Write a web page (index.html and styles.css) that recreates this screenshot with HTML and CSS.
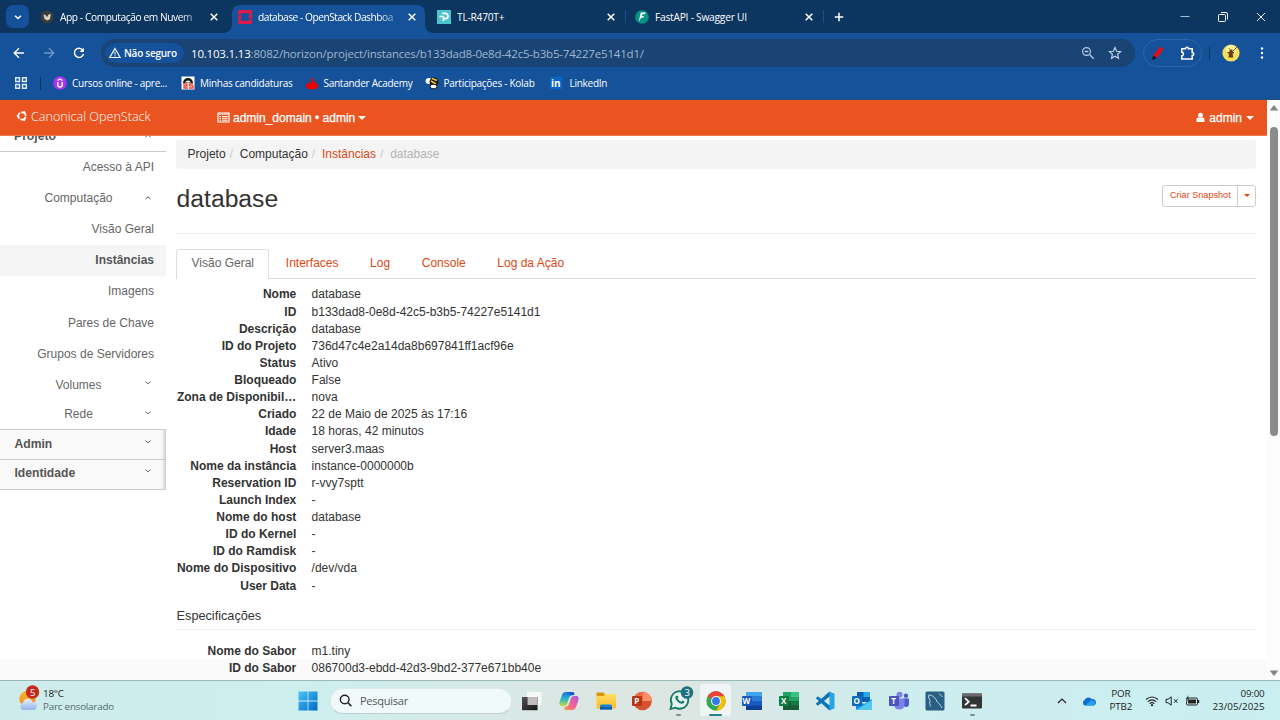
FILE: index.html
```html
<!DOCTYPE html>
<html lang="pt-BR">
<head>
<meta charset="utf-8">
<title>database - OpenStack Dashboard</title>
<link rel="stylesheet" href="styles.css">
</head>
<body>
<svg width="0" height="0" class="defs">
  <defs>
    <symbol id="x" viewBox="0 0 10 10"><path d="M1.7 1.7l6.6 6.6M8.3 1.7L1.7 8.3" stroke="currentColor" stroke-width="1.5"/></symbol>
    <symbol id="down" viewBox="0 0 8 8"><path d="M1.5 2.7L4 4.8l2.5-2.1" fill="none" stroke="#666" stroke-width="1"/></symbol>
    <symbol id="up" viewBox="0 0 8 8"><path d="M1.5 5L4 2.9 6.5 5" fill="none" stroke="#555" stroke-width="1"/></symbol>
    <linearGradient id="win" x1="0" y1="0" x2="1" y2="1"><stop stop-color="#4bc5f5"/><stop offset="1" stop-color="#0067c8"/></linearGradient>
    <linearGradient id="sun" x1="0" y1="0" x2="0" y2="1"><stop stop-color="#f8b92a"/><stop offset="1" stop-color="#f48a1c"/></linearGradient>
    <linearGradient id="cloudg" x1="0" y1="0" x2="0" y2="1"><stop stop-color="#e8f1fd"/><stop offset="1" stop-color="#93b3e8"/></linearGradient>
    <linearGradient id="copA" x1="0" y1="0" x2="0" y2="1"><stop stop-color="#1a6fe0"/><stop offset=".5" stop-color="#22b8c8"/><stop offset="1" stop-color="#c9d93a"/></linearGradient>
    <linearGradient id="copB" x1="1" y1="0" x2="0" y2="1"><stop stop-color="#a45be8"/><stop offset=".5" stop-color="#f0609a"/><stop offset="1" stop-color="#fb9a3c"/></linearGradient>
    <linearGradient id="folder" x1="0" y1="0" x2="0" y2="1"><stop stop-color="#ffdc62"/><stop offset="1" stop-color="#f8bd2c"/></linearGradient>
    <linearGradient id="dark" x1="0" y1="0" x2="1" y2="1"><stop stop-color="#505050"/><stop offset="1" stop-color="#151515"/></linearGradient>
  </defs>
</svg>

<header class="tabstrip">
  <span class="tab-menu"><svg width="10" height="10" viewBox="0 0 10 10"><path d="M2 3.7l3 2.8 3-2.8" fill="none" stroke="#fff" stroke-width="1.5"/></svg></span>
  <div class="tab tab-first">
    <svg class="fav" viewBox="0 0 14 14"><circle cx="7" cy="7" r="6.5" fill="#3c3c38"/><path d="M3.500 4.500l2 .5 1.500 2 1.500-2.500 2.300-.5-.8 5-2.500 1.500L4.500 9z" fill="#d9d4cb"/><path d="M6 3.500l1.500 2L7 7z" fill="#403c38"/></svg>
    <span class="tab-title fade">App - Computação em Nuvem</span>
    <svg class="close" viewBox="0 0 10 10"><use href="#x"/></svg>
  </div>
  <div class="tab active">
    <svg class="fav" viewBox="0 0 14 14"><path d="M1 0h12q1 0 1 1v3.5h-3.2V3.2H3.2v1.3H0V1q0-1 1-1zM0 5.3h3.2v3.4H0zM10.800 5.300h3.200v3.400h-3.200zM0 9.500h3.200v1.300h7.600V9.500H14V13q0 1-1 1H1q-1 0-1-1z" fill="#dc1a4b"/></svg>
    <span class="tab-title fade">database - OpenStack Dashboa</span>
    <svg class="close" viewBox="0 0 10 10"><use href="#x"/></svg>
  </div>
  <div class="tab">
    <svg class="fav" viewBox="0 0 14 14"><path d="M0 0h14v14H0z" fill="#4bc4ce"/><path d="M6 4.300V3.300h2.300a2.600 2.600 0 0 1 0 5.400H6M2.500 6.500h3.700M6.500 6.500v4.500" fill="none" stroke="#fff" stroke-width="1.700"/></svg>
    <span class="tab-title">TL-R470T+</span>
    <svg class="close" viewBox="0 0 10 10"><use href="#x"/></svg>
  </div>
  <div class="tab">
    <svg class="fav" viewBox="0 0 14 14"><circle cx="7" cy="7" r="6.800" fill="#079486"/><path d="M5.800 2.500H11L9.800 4.300H7.500L6.900 6h2.300L8 7.700H6.300L3.800 11.500z" fill="#fff"/></svg>
    <span class="tab-title">FastAPI - Swagger UI</span>
    <svg class="close" viewBox="0 0 10 10"><use href="#x"/></svg>
  </div>
  <svg class="new-tab" viewBox="0 0 10 10"><path d="M5 .8v8.400M.8 5h8.400" stroke="#fff" stroke-width="1.500"/></svg>
  <div class="window-controls">
    <svg viewBox="0 0 12 12"><path d="M1.500 5.500h9" stroke="#a9bdd3"/></svg>
    <svg viewBox="0 0 12 12"><rect x="1.500" y="3.500" width="7" height="7" rx="1" fill="none" stroke="#fff"/><path d="M4 1.500h5q1.500 0 1.500 1.500v5.500" fill="none" stroke="#fff"/></svg>
    <svg viewBox="0 0 12 12"><path d="M2 2l8 8M10 2l-8 8" stroke="#e8eef5"/></svg>
  </div>
</header>

<div class="browser">
  <div class="toolbar">
    <div class="nav">
      <svg viewBox="0 0 14 14"><path d="M12 7H2.500M7 2.200L2.200 7 7 11.800" fill="none" stroke="#fff" stroke-width="1.400"/></svg>
      <svg viewBox="0 0 14 14"><path d="M2 7h9.500M7 2.200L11.800 7 7 11.800" fill="none" stroke="#7297c6" stroke-width="1.300"/></svg>
      <svg viewBox="0 0 14 14"><path d="M10.800 4.200A4.600 4.600 0 1 0 11.500 8" fill="none" stroke="#fff" stroke-width="1.500"/><path d="M11.900 1.800v4.300H7.600z" fill="#fff"/></svg>
    </div>
    <div class="omnibox">
      <span class="chip"><svg width="12" height="12" viewBox="0 0 12 12"><path d="M6 1.400L11.200 10.500H.8z" fill="none" stroke="#fff" stroke-width="1.100"/><path d="M6 4.500v3M6 8.300v1.100" stroke="#fff"/></svg><span>Não seguro</span></span>
      <span class="url"><b>10.103.1.13</b>:8082/horizon/project/instances/b133dad8-0e8d-42c5-b3b5-74227e5141d1/</span>
      <svg class="om-icon" viewBox="0 0 14 14"><circle cx="5.500" cy="5.500" r="3.900" fill="none" stroke="#b7cce5" stroke-width="1.200"/><path d="M3.700 5.500h3.600M8.500 8.500l4.200 4.200" stroke="#b7cce5" stroke-width="1.300"/></svg>
      <svg class="om-icon star" viewBox="0 0 14 14"><path d="M7 1.500l1.600 3.700 4 .4-3 2.700.9 4L7 10.200 3.500 12.300l.9-4-3-2.700 4-.4z" fill="none" stroke="#c2d4ea" stroke-width="1.150"/></svg>
    </div>
    <div class="extensions">
      <svg viewBox="0 0 14 14"><path d="M9.300.8l3.300 2-6.200 8.400-3.400-2z" fill="#e80a12"/><path d="M3 9.200l3.400 2L2 13.200z" fill="#191014"/></svg>
      <svg viewBox="0 0 15 15"><path d="M1.800 2.800h3.700a1.500 1.500 0 0 1 3 0h3.700v3.700a1.500 1.500 0 0 1 0 3V13H1.800V9.700a1.700 1.700 0 0 0 0-3.400z" fill="none" stroke="#fff" stroke-width="1.500"/></svg>
    </div>
    <i class="tool-sep"></i>
    <svg class="avatar" viewBox="0 0 18 18"><circle cx="9" cy="9" r="8.600" fill="#f7df5a"/><circle cx="9" cy="6" r="5" fill="#fff3a2"/><path d="M7.500 5.500h3v2.500h1.500v1.500h-1.500l.8 4H6.500l.5-4H5.500V8h2z" fill="#6b3b16"/><path d="M10 8l5-5M7.500 5l-1-1" stroke="#8b5721"/></svg>
    <svg class="dots" viewBox="0 0 4 14"><circle cx="2" cy="2.500" r="1.200"/><circle cx="2" cy="7" r="1.200"/><circle cx="2" cy="11.500" r="1.200"/></svg>
  </div>
  <nav class="bookmarks">
    <svg class="apps" viewBox="0 0 14 14"><path d="M1.700 1.700h3.800v3.800H1.700zM8.500 1.700h3.800v3.800H8.500zM1.700 8.500h3.800v3.800H1.700zM8.500 8.500h3.800v3.800H8.500z" fill="none" stroke="#dce9f7" stroke-width="1.400"/></svg>
    <i class="tool-sep"></i>
    <a class="bm-udemy"><svg viewBox="0 0 14 14"><circle cx="7" cy="7" r="6.800" fill="#a435f0"/><path d="M4.800 6v3a2.200 2 0 0 0 4.400 0V6M4.500 4.500L7 3l2.500 1.500" fill="none" stroke="#fff" stroke-width="1.400"/></svg>Cursos online - apre...</a>
    <a class="bm-jobs"><svg viewBox="0 0 14 14"><path d="M.5.500h13v13H.5z" fill="#fff"/><path d="M2 7a5 5 0 0 1 10 0z" fill="#181818"/><path d="M4 6.500q3-4 6 0" fill="#fff"/><path d="M2 8h4v2H3v2h4M12 8H8.500v1.800H12V12H8" fill="none" stroke="#e8453c" stroke-width="1.300"/></svg>Minhas candidaturas</a>
    <a class="bm-sant"><svg viewBox="0 0 14 14"><ellipse cx="7" cy="10" rx="6.300" ry="3.400" fill="#ec0000"/><path d="M7 1q0 2 2 4t1.500 4.500l-5 1Q3 8 5 5q0 2 2 3 .5-2-.8-4T7 1z" fill="#ec0000"/></svg>Santander Academy</a>
    <a class="bm-kolab"><svg viewBox="0 0 14 14"><ellipse cx="4" cy="5" rx="3.500" ry="3" fill="#fff"/><ellipse cx="9" cy="6" rx="4.500" ry="4.500" fill="#171717"/><path d="M7 2.500l5 2M6 5l5 3" stroke="#f4c430" stroke-width="1.500"/><ellipse cx="8.500" cy="10.500" rx="3.500" ry="2.300" fill="#fff" stroke="#171717"/></svg>Participações - Kolab</a>
    <a class="bm-in"><svg viewBox="0 0 14 14"><rect x=".8" y=".8" width="12.400" height="12.400" rx="1" fill="#0a66c2"/><text x="2" y="11" font-size="10" font-weight="700" fill="#fff">in</text></svg>LinkedIn</a>
  </nav>
</div>

<div class="viewport">
  <div class="page">
    <div class="navbar">
      <div class="brand"><svg viewBox="0 0 12 12"><circle cx="6" cy="6" r="3.700" fill="none" stroke="#fff" stroke-width="1.700" stroke-dasharray="6.600 1.150" stroke-dashoffset="7"/><circle cx="1.900" cy="6" r="1.200" fill="#fff"/><circle cx="8.200" cy="2.300" r="1.200" fill="#fff"/><circle cx="8.200" cy="9.700" r="1.200" fill="#fff"/></svg><span>Canonical OpenStack</span></div>
      <div class="context"><svg viewBox="0 0 13 11"><path d="M1 1h11v9H1z" fill="none" stroke="#fff" stroke-width="1.200"/><path d="M1 2h11M2.500 4.500H4M5 4.500h5.500M2.500 6.300H4M5 6.300h5.500M2.500 8.200H4M5 8.200h5.500" stroke="#fff"/></svg><span>admin_domain • admin</span><i class="caret"></i></div>
      <div class="user"><svg viewBox="0 0 10 11"><circle cx="5" cy="3" r="2.700"/><path d="M.5 10.500V8q0-2.500 2-2.700 2.500 1.600 5 0 2 .2 2 2.700v2.500z"/></svg><span>admin</span><i class="caret"></i></div>
    </div>
    <div class="body">
      <aside class="sidebar">
        <div class="panel-head first"><span>Projeto</span><svg class="chev"><use href="#up"/></svg></div>
        <div class="item">Acesso à API</div>
        <div class="group"><span>Computação</span><svg class="chev"><use href="#up"/></svg></div>
        <div class="item">Visão Geral</div>
        <div class="item current">Instâncias</div>
        <div class="item">Imagens</div>
        <div class="item">Pares de Chave</div>
        <div class="item">Grupos de Servidores</div>
        <div class="group short"><span>Volumes</span><svg class="chev"><use href="#down"/></svg></div>
        <div class="group short"><span>Rede</span><svg class="chev"><use href="#down"/></svg></div>
        <div class="panel-head boxed"><span>Admin</span><svg class="chev"><use href="#down"/></svg></div>
        <div class="panel-head boxed last"><span>Identidade</span><svg class="chev"><use href="#down"/></svg></div>
      </aside>
      <main>
        <ol class="breadcrumb"><li>Projeto</li><li>Computação</li><li class="link">Instâncias</li><li class="off">database</li></ol>
        <div class="page-head">
          <h1>database</h1>
          <div class="btn-group"><span class="btn">Criar Snapshot</span><span class="btn drop"><i class="caret"></i></span></div>
        </div>
        <div class="tabs"><span class="sel">Visão Geral</span><span>Interfaces</span><span>Log</span><span>Console</span><span>Log da Ação</span></div>
        <dl>
          <dt>Nome</dt><dd>database</dd>
          <dt>ID</dt><dd>b133dad8-0e8d-42c5-b3b5-74227e5141d1</dd>
          <dt>Descrição</dt><dd>database</dd>
          <dt>ID do Projeto</dt><dd>736d47c4e2a14da8b697841ff1acf96e</dd>
          <dt>Status</dt><dd>Ativo</dd>
          <dt>Bloqueado</dt><dd>False</dd>
          <dt>Zona de Disponibil…</dt><dd>nova</dd>
          <dt>Criado</dt><dd>22 de Maio de 2025 às 17:16</dd>
          <dt>Idade</dt><dd>18 horas, 42 minutos</dd>
          <dt>Host</dt><dd>server3.maas</dd>
          <dt>Nome da instância</dt><dd>instance-0000000b</dd>
          <dt>Reservation ID</dt><dd>r-vvy7sptt</dd>
          <dt>Launch Index</dt><dd>-</dd>
          <dt>Nome do host</dt><dd>database</dd>
          <dt>ID do Kernel</dt><dd>-</dd>
          <dt>ID do Ramdisk</dt><dd>-</dd>
          <dt>Nome do Dispositivo</dt><dd>/dev/vda</dd>
          <dt>User Data</dt><dd>-</dd>
        </dl>
        <h4>Especificações</h4>
        <dl>
          <dt>Nome do Sabor</dt><dd>m1.tiny</dd>
          <dt>ID do Sabor</dt><dd>086700d3-ebdd-42d3-9bd2-377e671bb40e</dd>
        </dl>
      </main>
    </div>
  </div>
  <div class="scrollbar">
    <svg viewBox="0 0 10 8"><path d="M5 1l4.300 5.500H.7z" fill="#858585"/></svg>
    <i class="thumb"></i>
    <svg viewBox="0 0 10 8"><path d="M5 7L.7 1.500h8.600z" fill="#858585"/></svg>
  </div>
</div>

<footer class="taskbar">
  <div class="weather">
    <svg viewBox="0 0 24 28"><circle cx="9.500" cy="14" r="8.200" fill="url(#sun)"/><path d="M5 25a4 4 0 0 1 0-7.500 5 5 0 0 1 9.500-.5 4 4 0 0 1 .5 8z" fill="url(#cloudg)"/><circle cx="14.500" cy="7" r="6.700" fill="#c42b1c"/><text x="11.900" y="10.500" font-size="9.500" fill="#fff">5</text></svg>
    <div><p>18°C</p><p class="dim">Parc ensolarado</p></div>
  </div>
  <svg class="start" viewBox="0 0 20 20"><path d="M.5.500h9.100v9.100H.5zM10.400.500h9.100v9.100h-9.100zM.5 10.400h9.100v9.100H.5zM10.400 10.400h9.100v9.100h-9.100z" fill="url(#win)"/></svg>
  <div class="search"><svg viewBox="0 0 13 13"><circle cx="5.700" cy="5.500" r="4.300" fill="none" stroke="#222" stroke-width="1.400"/><path d="M9 8.800l3.300 3.300" stroke="#222" stroke-width="1.600"/></svg><span>Pesquisar</span></div>
  <div class="apps-row">
    <span><svg viewBox="0 0 20 20"><path d="M5 .800h14.500v13.500H5z" fill="#f8f8f8"/><path d="M0 6h15.500v13.200H0z" fill="url(#dark)"/><path d="M5.500 6h10v8h-10z" fill="#bdbdbd"/></svg></span>
    <span><svg viewBox="0 0 20 20"><path d="M7 1h6.500Q15.500 1 15 4L12.500 4.500Q10.500 5 10 7L8 13q-.8 2-3 2H2.500Q0 15 .5 11L3 4q1-3 4-3z" fill="url(#copA)"/><path d="M13 19H7Q5 19 5.500 16l2-.5Q9.500 15 10 13l2-6q.8-2 3-2h2.500Q20 5 19.500 9L17 16q-1 3-4 3z" fill="url(#copB)"/><path d="M8 1h6q1 0 1.500 3h-4z" fill="#2056c8"/></svg></span>
    <span><svg viewBox="0 0 20 20"><path d="M.5 1.500h7l1.500 2V6H.500z" fill="#d99708"/><path d="M.5 5h7L9.500 3H19q1 0 1 1v13.500H.500z" fill="url(#folder)"/><path d="M4 18.500V15q0-1.500 1.500-1.500h9Q16 13.500 16 15v3.500z" fill="#1581d8"/><path d="M4 16h12v2.500H4z" fill="#0c5ea8"/></svg></span>
    <span><svg viewBox="0 0 20 20"><circle cx="10.500" cy="10" r="9.300" fill="#d35230"/><path d="M10.500.7a9.300 9.300 0 0 1 9.300 9.300h-9.300z" fill="#ff8f6b"/><path d="M1.300 10H10.500V.700A9.300 9.300 0 0 0 1.300 10z" fill="#ed6c47"/><rect y="5" width="10" height="10" rx="1" fill="#b83618"/><text x="2.300" y="12.900" class="glyph">P</text></svg></span>
    <span class="open"><svg class="wide" viewBox="0 0 24 24"><path d="M2.500 22l1.300-5a8.700 8.700 0 1 1 3.500 3.600z" fill="#e7f5f2" stroke="#177a62" stroke-width="1.800"/><path d="M8 9q1.500-1.500 2.500 1l-.8 1.500q1.500 2.500 3.500 3.200l1.500-1.200q2.500 1 1.300 2.500-3 2.200-6.500-1.500T8 9z" fill="#177a62"/><circle cx="19" cy="5.500" r="6.300" fill="#1f7080"/><text x="16.500" y="9" font-size="9.500" fill="#fff">3</text></svg></span>
    <span class="focused"><svg viewBox="0 0 20 20"><circle cx="10" cy="10" r="9.700" fill="#34a853"/><path d="M10 10L1.600 5.200a9.700 9.700 0 0 1 16.800 0z" fill="#ea4335"/><path d="M10 5.200h8.400A9.700 9.700 0 0 1 10 19.700l4.200-7.300z" fill="#fbbc04"/><circle cx="10" cy="10" r="4.900" fill="#fff"/><circle cx="10" cy="10" r="3.900" fill="#3078ed"/></svg></span>
    <span><svg viewBox="0 0 20 20"><path d="M4 1h16v18H4z" fill="#185abd"/><path d="M4 1h16v4.500H4z" fill="#41a5ee"/><path d="M4 5.500h16V10H4z" fill="#2b7cd3"/><path d="M4 14.500h16V19H4z" fill="#103f91"/><rect y="5" width="10" height="10" rx="1" fill="#185abd"/><text x=".6" y="12.900" class="glyph">W</text></svg></span>
    <span><svg viewBox="0 0 20 20"><path d="M4 1h8v9H4z" fill="#21a366"/><path d="M12 1h8v4.500h-8z" fill="#33c481"/><path d="M12 5.500h8V10h-8z" fill="#21a366"/><path d="M4 10h16v9H4z" fill="#185c37"/><path d="M12 10h8v4.500h-8z" fill="#107c41"/><rect y="5" width="10" height="10" rx="1" fill="#107c41"/><text x="2" y="12.900" class="glyph">X</text></svg></span>
    <span><svg viewBox="0 0 20 20"><path d="M14.500.5L.800 12.800l2 2L16 4.500z" fill="#1070b3"/><path d="M14.500 19.500L.800 7.200l2-2L16 15.500z" fill="#0877b9"/><path d="M14.500.500l5 2.200v14.600l-5 2.200z" fill="#2ba4e4"/></svg></span>
    <span><svg viewBox="0 0 20 20"><path d="M5 1h13v10H5z" fill="#0a5faf"/><path d="M11.500 1H18v5h-6.500z" fill="#28a8ea"/><path d="M4 8l8 5 8-5v10q0 1-1 1H5q-1 0-1-1z" fill="#1490df"/><path d="M4 19l16-10v9q0 1-1 1z" fill="#50c8f0"/><rect y="5" width="10" height="10" rx="1" fill="#0f6cbd"/><text x="1.400" y="12.900" class="glyph">O</text></svg></span>
    <span><svg viewBox="0 0 20 20"><circle cx="17" cy="4.800" r="2.200" fill="#5059c9"/><circle cx="10.500" cy="3.700" r="3" fill="#7b83eb"/><path d="M14 7.500h6V13q0 3-3 3t-3-3z" fill="#5059c9"/><path d="M5 7.500h10.500V13q0 5.500-5.200 5.500T5 13z" fill="#7b83eb"/><rect y="5" width="10" height="10" rx="1" fill="#4b53bc"/><text x="2.200" y="12.900" class="glyph">T</text></svg></span>
    <span><svg viewBox="0 0 20 20"><rect x=".5" y=".5" width="19" height="19" rx="1.500" fill="#285f83"/><path d="M5.500 15.500Q4 12 5 9.500L3.500 6Q2.500 3.500 5 4q4 .5 6 4.500 1 3 3.500 4.500l1 1.500 1.500 2.500M14 2.500l3.500 3.500" fill="none" stroke="#bdd1dd" stroke-width="1"/></svg></span>
    <span class="open"><svg viewBox="0 0 20 20"><rect y="2.500" width="20" height="15" rx="1" fill="#333436"/><path d="M0 2.500h20v3H0z" fill="#6b6b6b"/><path d="M3 7.200l3.800 3.500L3 14.200M8.500 14.500h6" fill="none" stroke="#fff" stroke-width="1.800"/></svg></span>
  </div>
  <div class="tray">
    <svg class="t-up" viewBox="0 0 12 12"><path d="M2 8l4-4 4 4" fill="none" stroke="#222" stroke-width="1.200"/></svg>
    <svg class="t-cloud" viewBox="0 0 14 10"><path d="M3 9.500A3 3 0 0 1 2.500 4 4.500 4.500 0 0 1 10 3.200a3.200 3.200 0 0 1 1.500 6.300z" fill="#0f6fd0"/><path d="M3 9.500L9 4.500a3.500 3.500 0 0 1 4.500 3q0 2-2 2z" fill="#2aa0ea"/></svg>
    <div class="lang"><p>POR</p><p>PTB2</p></div>
    <svg class="t-wifi" viewBox="0 0 14 12"><path d="M1 4.500q6-5 12 0M2.800 6.600q4.200-3.500 8.400 0M4.600 8.600q2.400-2 4.800 0" fill="none" stroke="#222" stroke-width="1.100"/><circle cx="7" cy="10.200" r="1.100" fill="#222"/></svg>
    <svg class="t-vol" viewBox="0 0 14 12"><path d="M1 4.300h2L6.200 1.800v8.400L3 7.700H1zM9 4.200l3.500 3.600M12.500 4.200L9 7.800" fill="none" stroke="#222"/></svg>
    <svg class="t-bat" viewBox="0 0 15 12"><rect x="1.500" y="3" width="11" height="7" rx="1.200" fill="none" stroke="#222"/><path d="M3 4.500h8v4H3zM13 5h1.200v3H13z" fill="#222"/><path d="M3.500 0L.5 4h2L1.500 7l4-4.200H3.500z" fill="#222" stroke="#cdeff0" stroke-width=".4"/></svg>
    <div class="clock"><p>09:00</p><p class="date">23/05/2025</p></div>
  </div>
</footer>
</body>
</html>
```

FILE: styles.css
```css
* { box-sizing: border-box; }
body {
  margin: 0; width: 1280px; height: 720px; overflow: hidden;
  display: flex; flex-direction: column;
  font-family: "Liberation Sans", Arial, sans-serif; font-size: 12px; color: #333; background: #fff;
}
p, h1, h4, ol, dl, dd { margin: 0; padding: 0; }
svg { display: block; flex: none; overflow: visible; }
.defs { position: absolute; }

/* Browser tabs */
.tabstrip {
  height: 33px; flex: none; display: flex; align-items: center; background: #0c355f; color: #fff;
  font: 10.2px "Open Sans", sans-serif; letter-spacing: -.23px; padding-left: 6px; white-space: nowrap;
}
.tab-menu { width: 23px; height: 23px; border-radius: 7px; background: #15509a; display: flex; align-items: center; justify-content: center; }
.tab { width: 198.500px; height: 28px; margin-top: 5px; padding: 0 8px 5px 12px; display: flex; align-items: center; position: relative; }
.tab-first { width: 203px; padding-left: 11px; padding-right: 13.500px; }
.fav { width: 14px; height: 14px; }
.tab-title { flex: 1; margin-left: 6px; overflow: hidden; }
.fade { -webkit-mask-image: linear-gradient(90deg, #000 86%, rgba(0,0,0,.3) 100%); mask-image: linear-gradient(90deg, #000 86%, rgba(0,0,0,.3) 100%); margin-right: 10px; letter-spacing: -.42px; }
.close { width: 10px; height: 10px; color: #fff; }
.active { width: 193px; padding: 0 8px 5px 6px; border-radius: 8px 8px 0 0; background: #15529a; }
.active .fade { letter-spacing: -.48px; }
.active::before, .active::after { content: ""; position: absolute; bottom: 0; width: 8px; height: 8px; }
.active::before { left: -8px; background: radial-gradient(circle at 0 0, transparent 7.500px, #15529a 8px); }
.active::after { right: -8px; background: radial-gradient(circle at 100% 0, transparent 7.500px, #15529a 8px); }
.active + .tab { width: 202px; padding-right: 10.500px; }
.active ~ .tab:not(.active) { border-right: 1px solid transparent; background: linear-gradient(#1d4f86, #1d4f86) 100% 5px / 1px 13px no-repeat; }
.active + .tab + .tab { padding-left: 8px; padding-right: 10px; width: 197.500px; }
.new-tab { width: 10px; height: 10px; margin-left: 9px; }
.window-controls { margin-left: auto; display: flex; gap: 26px; padding-right: 13px; }
.window-controls svg { width: 12px; height: 12px; }

/* Toolbar and bookmarks */
.browser { flex: none; height: 67px; background: #15529a; box-shadow: inset 0 -1px #254d82; font: 10px "Open Sans", sans-serif; color: #fff; }
.toolbar { height: 40px; display: flex; align-items: center; }
.nav { width: 101px; display: flex; gap: 16px; padding-left: 12px; }
.nav svg { width: 14px; height: 14px; }
.omnibox { width: 1034px; height: 28px; border-radius: 14px; background: #194474; display: flex; align-items: center; padding: 0 13px 0 4px; }
.chip { width: 79px; height: 20px; border-radius: 10px; background: #15509a; display: flex; align-items: center; gap: 3px; padding-left: 4px; font-weight: 600; letter-spacing: -.25px; white-space: nowrap; }
.url { flex: 1; margin-left: 7px; font-size: 11.500px; letter-spacing: -.19px; color: #9fb7d3; white-space: nowrap; }
.url b { font-weight: 400; color: #fff; }
.om-icon { width: 14px; height: 14px; }
.star { margin-left: 13px; }
.extensions { width: 59px; height: 28px; margin-left: 8px; border: 1px solid #2c65a8; border-radius: 14px; display: flex; align-items: center; gap: 15px; padding-left: 6px; }
.extensions svg { width: 15px; height: 15px; }
.tool-sep { width: 1px; height: 13px; background: #0c355f; flex: none; }
.toolbar .tool-sep { margin-left: 7px; }
.avatar { width: 18px; height: 18px; margin-left: 12px; }
.dots { width: 4px; height: 14px; fill: #fff; margin-left: 20px; }
.bookmarks { height: 20px; display: flex; align-items: center; padding-left: 14px; letter-spacing: -.27px; white-space: nowrap; }
.apps { width: 14px; height: 14px; }
.bookmarks .tool-sep { margin: 0 12px; }
.bookmarks a { display: flex; align-items: center; gap: 5px; }
.bookmarks a svg { width: 14px; height: 14px; }
.bm-udemy { width: 128px; }
.bm-jobs { width: 123.500px; }
.bm-sant { width: 120px; }
.bm-kolab { width: 124px; }
.bookmarks .bm-in { gap: 7px; }
svg text { font-family: "Open Sans", sans-serif; letter-spacing: 0; }
svg .glyph { font-size: 8px; font-weight: 700; fill: #fff; }

/* Web page */
.viewport { flex: 1; min-height: 0; display: flex; }
.page { width: 1267px; display: flex; flex-direction: column; background: linear-gradient(#fff 559px, #fafafa 559px); }
.navbar { height: 36px; flex: none; background: #e95420; color: #fff; display: flex; align-items: center; border-bottom: 1px solid #ef7a50; z-index: 1; }
.navbar svg { fill: #fff; }
.brand { width: 217px; padding-left: 16px; display: flex; align-items: center; gap: 3px; font: 300 12.600px "Open Sans", sans-serif; margin-top: -3px; }
.brand svg { width: 12px; height: 12px; }
.brand svg > circle:first-child { fill: none; }
.context, .user { display: flex; align-items: center; -webkit-text-stroke: .25px #fff; }
.context svg { width: 13px; height: 11px; margin-right: 3px; }
.user { margin-left: auto; padding-right: 13px; }
.user svg { width: 9px; height: 11px; margin-right: 4px; }
.caret { display: inline-block; border: 4px solid transparent; border-top-color: currentColor; border-bottom: 0; margin-left: 4px; }
.context .caret { margin-left: 3px; }
.body { flex: 1; min-height: 0; display: flex; overflow: hidden; }
.sidebar { width: 166px; flex: none; margin-top: -15px; color: #666; }
.panel-head { height: 31px; display: flex; align-items: center; justify-content: space-between; padding: 0 14px; font-weight: 700; color: #555; }
.first { border-bottom: 1px solid #ccc; font-size: 12.200px; }
.chev { width: 8px; height: 8px; }
.item { height: 31.300px; display: flex; align-items: center; justify-content: flex-end; padding: 0 12px 1.500px 0; }
.current { background: #f5f5f5; font-weight: 700; color: #555; }
.group { height: 30.500px; display: flex; align-items: center; padding: 0 14px 1px 0; }
.group span { flex: 1; text-align: center; padding-left: 13px; }
.short { height: 29.400px; padding-bottom: 0; }
.boxed { height: 30px; border-top: 1px solid #ccc; border-right: 1px solid #ccc; box-shadow: inset -3px 0 2px -1px #ddd; background: #f9f9f9; font-size: 12.150px; padding: 0 13px 2px 14.500px; }
.boxed .chev { margin-top: -4px; }
.short .chev { margin-top: -3px; }
.last { height: 31px; border-bottom: 1px solid #ccc; padding-bottom: 3px; }
main { width: 1080px; margin-left: 10px; }
.breadcrumb { height: 29px; margin-top: 4px; background: #f4f4f4; border-radius: 3px; list-style: none; display: flex; align-items: center; padding: 0 0 1.500px 11.600px; color: #333; }
.breadcrumb li + li::before { content: "/"; color: #ccc; padding: 0 6.800px 0 4px; }
.breadcrumb .link { color: #dd4814; }
.breadcrumb .off { color: #b4b4b4; }
.page-head { height: 65px; display: flex; justify-content: space-between; border-bottom: 1px solid #eee; }
h1 { font-size: 24.700px; font-weight: 400; line-height: 30px; margin-top: 15px; padding-left: .6px; }
.btn-group { display: flex; width: 94px; height: 22px; margin-top: 16px; border: 1px solid #ccc; border-radius: 3px; color: #dd4814; font-size: 9.100px; line-height: 19px; white-space: nowrap; }
.btn { flex: 1; padding-left: 7px; }
.drop { flex: none; width: 18px; border-left: 1px solid #ccc; padding: 0; display: flex; align-items: center; justify-content: center; }
.drop .caret { border-width: 3px; border-bottom: 0; margin: -1px 0 0; }
.tabs { height: 30px; margin-top: 15px; border-bottom: 1px solid #ddd; display: flex; color: #dd4814; line-height: 28px; }
.tabs span + span { padding: 0 15.800px; }
.tabs span:nth-child(2) { padding-left: 16.800px; }
.tabs .sel { width: 93px; height: 30px; padding-left: 14.500px; border: 1px solid #ddd; border-bottom: 0; border-radius: 3px 3px 0 0; background: #fff; color: #666; line-height: 27px; }
dl { display: grid; grid-template-columns: 120.300px 1fr; column-gap: 15.300px; grid-auto-rows: 17.140px; line-height: 17.140px; margin-top: 7.400px; }
dt { font-weight: 700; text-align: right; white-space: nowrap; }
h4 { font-size: 12.700px; font-weight: 400; line-height: 16px; margin-top: 13px; padding: 0 0 5.600px .6px; border-bottom: 1px solid #eee; }
h4 + dl { margin-top: 13px; }
.scrollbar { width: 13px; background: #fcfcfc; display: flex; flex-direction: column; align-items: center; padding: 4px 0 3px; }
.scrollbar svg { width: 10px; height: 8px; }
.scrollbar svg:last-child { margin-top: auto; }
.thumb { width: 8px; height: 309px; border-radius: 4px; background: #8b8b8b; margin-top: 15px; }

/* Taskbar */
.taskbar {
  height: 40px; flex: none; border-top: 1px solid #9bb8b8; display: flex; align-items: center;
  background: linear-gradient(90deg, #cdebea 0, #cdefee 300px, #dce6e3 600px, #dce6e3 690px, #cdedee 920px, #caeff1 100%);
  font-family: "Open Sans", sans-serif; font-size: 9.800px; letter-spacing: -.2px; color: #1d2425;
}
.taskbar p { line-height: 13.300px; white-space: nowrap; }
.weather { width: 298px; padding-left: 18px; display: flex; gap: 1px; align-items: center; }
.weather > div { margin-top: -1px; }
.weather > svg { width: 24px; height: 28px; margin-top: -3px; }
.weather .dim { color: #566a6b; }
.start { width: 20px; height: 20px; }
.search { width: 182px; height: 26px; margin: 0 3px 0 12px; border-radius: 13px; background: #f1fafa; border: 1px solid #dcebea; border-bottom-color: #bfcfcf; display: flex; align-items: center; gap: 8px; padding-left: 8px; font-size: 11px; letter-spacing: -.25px; color: #505858; }
.search svg { width: 13px; height: 13px; }
.apps-row { display: flex; height: 39px; margin-left: -1px; }
.apps-row span { width: 36.650px; display: flex; align-items: center; justify-content: center; position: relative; }
.apps-row svg { width: 20px; height: 20px; }
.apps-row .wide { width: 24px; height: 24px; margin: -4px 0 0 3px; }
.focused::before { content: ""; position: absolute; inset: 3px 3px 4px; background: #eef5f4; border-radius: 3px; }
.focused svg { position: relative; }
.open::after, .focused::after { content: ""; position: absolute; bottom: 4px; width: 5px; height: 2px; border-radius: 1px; background: #818d8d; }
.focused::after { width: 13px; background: #287f91; }
.tray { flex: 1; display: flex; align-items: center; height: 39px; }
.t-up { width: 12px; height: 12px; margin-left: 66px; }
.t-cloud { width: 14px; height: 10px; margin-left: 14px; }
.lang { width: 49px; text-align: center; margin-top: -1px; }
.t-wifi { width: 14px; height: 12px; }
.t-vol { width: 14px; height: 12px; margin-left: 6px; }
.t-bat { width: 15px; height: 12px; margin-left: 6px; }
.clock { margin-left: auto; margin-right: 15.500px; margin-top: -1px; text-align: right; }
.clock .date { letter-spacing: 0; }
```
